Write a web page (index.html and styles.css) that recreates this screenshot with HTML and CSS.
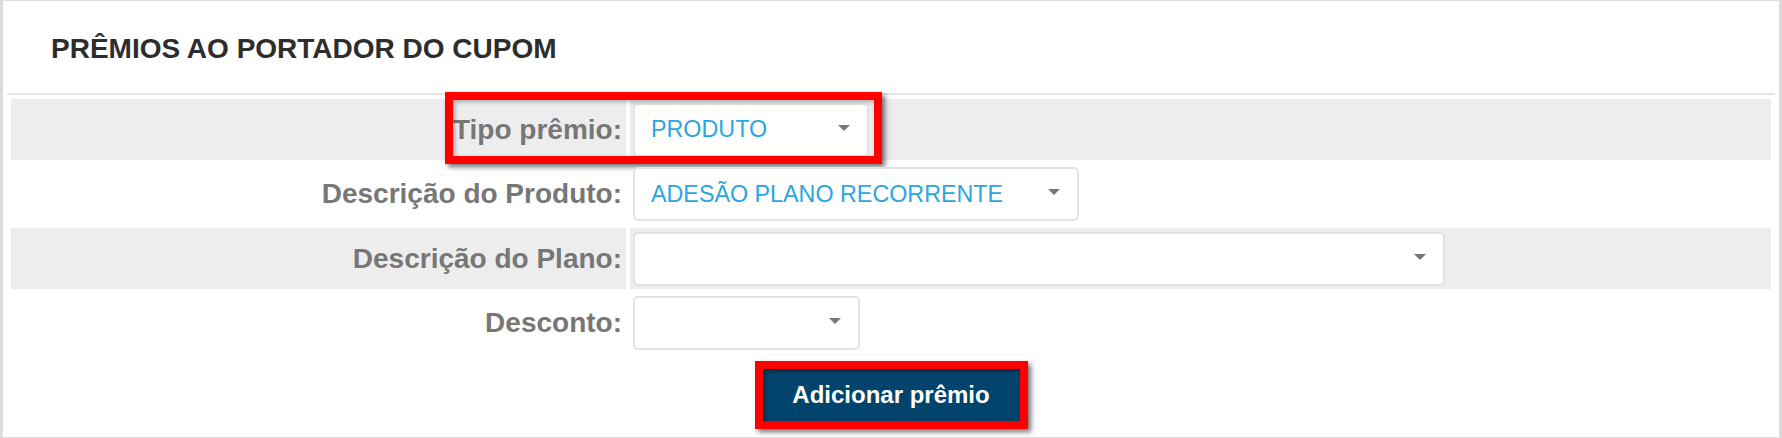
FILE: index.html
```html
<!DOCTYPE html>
<html lang="pt-BR">
<head>
    <meta charset="UTF-8">
    <meta name="viewport" content="width=device-width, initial-scale=1.0">
    <title>Prêmios ao portador do cupom</title>
    <link rel="stylesheet" href="styles.css">
</head>
<body>
    <div class="panel">
        <div class="panel-header">
            <h3 class="panel-title">PRÊMIOS AO PORTADOR DO CUPOM</h3>
        </div>

        <div class="form-table">
            <div class="form-row alt">
                <label class="form-label">Tipo prêmio:</label>
                <div class="form-field">
                    <div class="select select-tipo">PRODUTO</div>
                </div>
                <span class="highlight"></span>
            </div>

            <div class="form-row">
                <label class="form-label">Descrição do Produto:</label>
                <div class="form-field">
                    <div class="select select-produto">ADESÃO PLANO RECORRENTE</div>
                </div>
            </div>

            <div class="form-row alt">
                <label class="form-label">Descrição do Plano:</label>
                <div class="form-field">
                    <div class="select select-plano"></div>
                </div>
            </div>

            <div class="form-row">
                <label class="form-label">Desconto:</label>
                <div class="form-field">
                    <div class="select select-desconto"></div>
                </div>
            </div>
        </div>

        <div class="actions">
            <span class="btn-frame">
                <button type="button" class="btn-add">Adicionar prêmio</button>
            </span>
        </div>
    </div>
</body>
</html>
```

FILE: styles.css
```css
* {
    margin: 0;
    padding: 0;
    box-sizing: border-box;
    font-family: 'Liberation Sans', Arial, Helvetica, sans-serif;
}

body {
    background: #dcdcdc;
    height: 438px;
    overflow: hidden;
}

.panel {
    background: white;
    margin: 1px 3px 1px 3px;
    height: 436px;
}

.panel-header {
    margin: 0 4px;
    padding: 32px 0 29px 44px;
    border-bottom: 2px solid #e4e4e4;
}

.panel-title {
    color: #2d2d2d;
    font-size: 28px;
    font-weight: bold;
    line-height: 31px;
}

.form-table {
    display: grid;
    grid-auto-rows: 61px;
    row-gap: 3.5px;
    padding: 4px 8px 0;
}

.form-row {
    position: relative;
    display: grid;
    grid-template-columns: 615px 1fr;
    column-gap: 4px;
}

.form-row.alt .form-label,
.form-row.alt .form-field {
    background: #ededed;
}

.form-label {
    display: flex;
    align-items: center;
    justify-content: flex-end;
    padding-right: 4px;
    color: #777;
    font-size: 28px;
    font-weight: bold;
}

.form-field {
    display: flex;
    align-items: center;
    padding-left: 3px;
}

.select {
    position: relative;
    height: 54px;
    display: flex;
    align-items: center;
    padding-left: 16px;
    border: 2px solid #e2e2e2;
    border-radius: 5px;
    background: white;
    color: #2ba6df;
    font-size: 23.3px;
}

.select::after {
    content: '';
    position: absolute;
    right: 17px;
    top: 20px;
    border-left: 6px solid transparent;
    border-right: 6px solid transparent;
    border-top: 6px solid #777;
}

.select-tipo { width: 236px; }
.select-produto { width: 446px; }
.select-plano { width: 812px; }
.select-desconto { width: 227px; }

/* red annotation box over the first row */
.highlight {
    position: absolute;
    left: 434px;
    top: -7px;
    width: 437px;
    height: 72px;
    border: 8px solid #f00;
    box-shadow: 3px 3px 5px rgba(0, 0, 0, 0.55), inset 2px 2px 4px rgba(0, 0, 0, 0.3);
    pointer-events: none;
}

.actions {
    display: flex;
    justify-content: center;
    padding-top: 7.5px;
}

.btn-frame {
    display: inline-flex;
    border: 8px solid #f00;
    box-shadow: 3px 3px 5px rgba(0, 0, 0, 0.55);
}

.btn-add {
    width: 257px;
    height: 52px;
    border: none;
    background: #03446d;
    color: white;
    font-size: 24px;
    font-weight: bold;
    box-shadow: inset 2px 2px 4px rgba(0, 0, 0, 0.4);
    cursor: pointer;
}
```
